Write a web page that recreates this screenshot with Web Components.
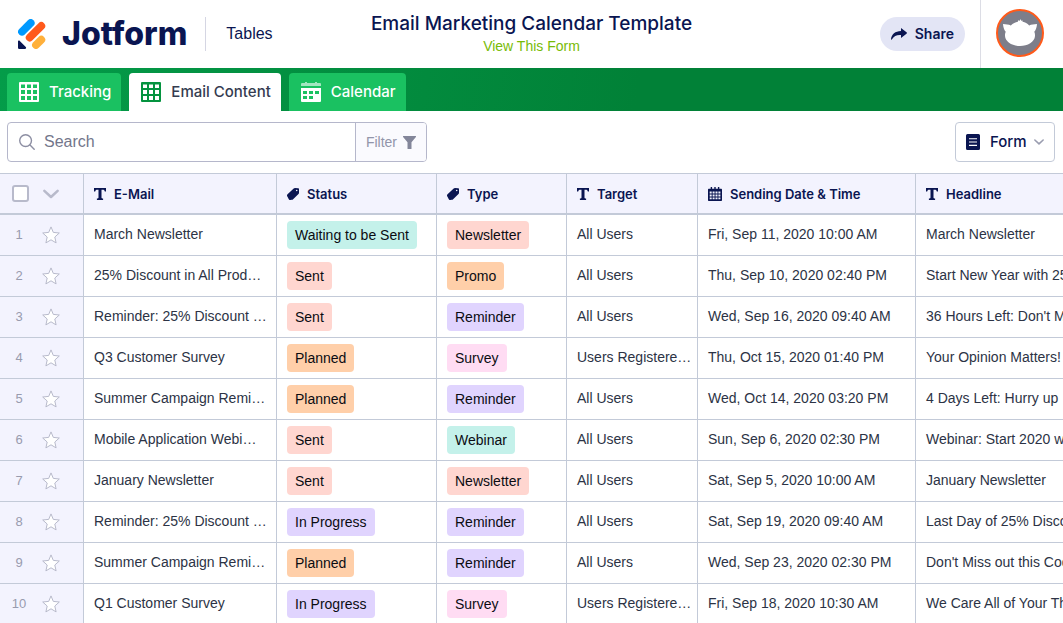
<!DOCTYPE html>
<html lang="en">
<head>
<meta charset="utf-8">
<title>Email Marketing Calendar Template</title>
<style>
  :root {
    --navy: #0a1551;
    --ink: #2c3345;
    --muted: #8d8fa3;
    --line: #c3cad8;
    --panel: #f3f3fe;
    --body: "Liberation Sans", Arial, sans-serif;
    --strong: Inter, "Liberation Sans", sans-serif;
  }
  body {
    margin: 0;
    font: 400 14px/20px var(--body);
    color: var(--ink);
    background: #fff;
  }
</style>
</head>
<body>
<tables-app></tables-app>

<script>
const ICONS = {
  logo: ['0 0 28 30', `
    <g stroke-width="7.800" stroke-linecap="round">
      <path d="M4 12.700 12.700 4" stroke="#0099ff"/>
      <path d="M11.700 18.600 23.300 7" stroke="#ff5a1c"/>
      <path d="M18 26 23.300 20.700" stroke="#ffb03b"/>
    </g>
    <path d="M0 22.600c0-1 1.100-1.400 1.800-.7l6 6.100c.7.700.200 1.900-.8 1.900H1.200A1.200 1.200 0 0 1 0 28.700z" fill="#0a1551"/>`],
  grid: ['0 0 20 20', `
    <path fill="currentColor" fill-rule="evenodd" d="M1 0h18a1 1 0 0 1 1 1v18a1 1 0 0 1-1 1H1a1 1 0 0 1-1-1V1a1 1 0 0 1 1-1z
      M2 2.500h4v3.500H2zM8 2.500h4v3.500H8zM14 2.500h4v3.500h-4z
      M2 8h4v4H2zM8 8h4v4H8zM14 8h4v4h-4z
      M2 14h4v4H2zM8 14h4v4H8zM14 14h4v4h-4z"/>`],
  calendar: ['0 0 20 20', `
    <path fill="currentColor" opacity=".6" d="M0 4V2a1 1 0 0 1 1-1h3V0h2v1h8V0h2v1h3a1 1 0 0 1 1 1v2z"/>
    <path fill="currentColor" fill-rule="evenodd" d="M0 6h20v13a1 1 0 0 1-1 1H1a1 1 0 0 1-1-1z
      M2 9v3h4V9zM8 9v3h4V9zM14 9v3h4V9zM2 14v3h4v-3zM8 14v3h4v-3z"/>`],
  share: ['0 0 16 12', `<path fill="currentColor" d="M10 0l5.500 4.300a.9.9 0 0 1 0 1.400L10 10V7C5.800 6.700 3 7.900.8 11.400c-.3.500-.8.300-.8-.2C.5 6.200 4.200 3 10 2.900z"/>`],
  search: ['0 0 16 16', `<g fill="none" stroke="#8d8fa3" stroke-width="1.400" stroke-linecap="round"><circle cx="6.600" cy="6.600" r="5.900"/><path d="M11 11l4.200 4.200"/></g>`],
  filter: ['0 0 13 13', `<path fill="#83869a" d="M.5 0h12c.5 0 .7.5.4.9L8.500 6.200v6.300a.5.5 0 0 1-.5.5H5a.5.5 0 0 1-.5-.5V6.200L.1.900C-.2.5 0 0 .5 0z"/>`],
  form: ['0 0 14 16', `<path fill="currentColor" fill-rule="evenodd" d="M1.500 0h11A1.500 1.500 0 0 1 14 1.500v13a1.500 1.500 0 0 1-1.500 1.500h-11A1.500 1.500 0 0 1 0 14.500v-13A1.500 1.500 0 0 1 1.500 0zM3 4.200v1.100h8V4.200zM3 7.400v1.200h8V7.400zM3 10.800v1.100h8v-1.100z"/>`],
  chevron: ['0 0 14 8', `<path d="M1.200 1.200 7 6.600l5.800-5.400" fill="none" stroke="currentColor" stroke-width="2.200" stroke-linecap="round" stroke-linejoin="round"/>`],
  text: ['0 0 12 12', `<path fill="currentColor" d="M0 0h12v3.600h-1.200c-.2-1.300-.8-1.900-2-1.900H7.500v7.900c0 .7.400.9 1.600 1V12H2.900v-1.400c1.200-.1 1.600-.3 1.600-1V1.700H3.200c-1.200 0-1.800.6-2 1.900H0z"/>`],
  tag: ['0 0 12 12', `<path fill="currentColor" fill-rule="evenodd" d="M11.300.2 8 0c-.5 0-1 .2-1.300.5L.5 6.300c-.6.6-.7 1.300-.3 2l1.600 3c.3.6.8.8 1.500.7l1.600-.2c.5-.1.9-.3 1.200-.6l5.400-5.300c.3-.3.5-.7.500-1.200V.9c0-.4-.3-.7-.7-.7zM9.700 1.700a.8.800 0 1 1 0 1.600.8.800 0 0 1 0-1.600z"/>`],
  date: ['0 0 14 14', `
    <path fill="currentColor" d="M0 2.800c0-.6.4-1 1-1h1.700V0h1.400v1.800h2.200V0h1.400v1.800h2.200V0h1.400v1.800H13c.6 0 1 .4 1 1V13c0 .6-.4 1-1 1H1c-.6 0-1-.4-1-1z"/>
    <path fill="#f3f3fe" d="M1.700 4.600h2v1.900h-2zM4.600 4.600h2v1.900h-2zM7.500 4.600h2v1.900h-2zM10.400 4.600h2v1.900h-2zM1.700 7.500h2v1.900h-2zM4.600 7.500h2v1.900h-2zM7.500 7.500h2v1.900h-2zM10.400 7.500h2v1.900h-2zM1.700 10.400h2v1.900h-2zM4.600 10.400h2v1.900h-2zM7.500 10.400h2v1.900h-2zM10.400 10.400h2v1.900h-2z"/>`],
  star: ['0 0 18 18', `<path d="M9 .9l2.300 5.500 6 .6-4.500 4 1.300 5.900L9 13.800l-5.100 3.100L5.200 11 .7 7l6-.6z" fill="#fff" stroke="#b8bacb" stroke-width="1"/>`],
  avatar: ['0 0 48 48', `
    <circle cx="24" cy="24" r="23" fill="#7d7e8a" stroke="#ff5a1a" stroke-width="2"/>
    <path fill="#fff" d="M7 15c3 .2 5.600.5 7.800 1.400 2.200-2 4.700-3.200 7-3.700.2-.8.600-1.400 1.100-1.700l.5 1.200c.2-1 .8-1.600 1.500-2 0 .8.200 1.300.5 1.700.3-.3.600-.5 1-.6-.1.600 0 1.100.3 1.500 2.400.6 4.600 1.800 6.500 3.600C35.400 15.500 38 15.200 41 15c-.2 3-1 5.800-2.700 7.800.6 1.400.8 2.800.7 4.200C38.600 33 31.700 37 24 37S9.400 33 9 27c-.1-1.400.1-2.800.7-4.200C8 20.800 7.200 18 7 15z"/>`]
};

const define = (name, html) => customElements.define(name, class extends HTMLElement {
  constructor() {
    super();
    const template = document.createElement('template');
    template.innerHTML = html;
    this.attachShadow({ mode: 'open' }).append(template.content.cloneNode(true));
  }
});

/* <ui-icon name="…"> draws one icon, sized by the --w and --h properties */
customElements.define('ui-icon', class extends HTMLElement {
  connectedCallback() {
    if (this.shadowRoot) return;
    const [box, art] = ICONS[this.getAttribute('name')];
    const [, , w, h] = box.split(' ');
    this.attachShadow({ mode: 'open' }).innerHTML = `
      <style>
        :host { display: inline-block; flex: none; width: var(--w, ${w}px); height: var(--h, ${h}px); }
        svg { display: block; width: 100%; height: 100%; }
      </style>
      <svg viewBox="${box}" fill="none" aria-hidden="true">${art}</svg>`;
  }
});

define('brand-logo', `
  <style>
    :host { display: flex; align-items: center; }
    .home { display: flex; align-items: center; gap: 16px; color: var(--navy); text-decoration: none; }
    .word { font: 800 32px/34px var(--strong); }
    .product { margin-left: 18px; padding-left: 20px; border-left: 1px solid #d5d6e3; font-size: 16px; line-height: 34px; color: var(--navy); }
  </style>
  <a class="home" href="#"><ui-icon name="logo"></ui-icon><span class="word">Jotform</span></a>
  <span class="product">Tables</span>
`);

define('share-button', `
  <style>
    button { display: flex; align-items: center; gap: 8px; height: 34px; padding: 0 11px; border: 0; border-radius: 17px;
      background: #e3e5f5; color: var(--navy); font: 600 14px/20px var(--strong); cursor: pointer; }
  </style>
  <button type="button"><ui-icon name="share"></ui-icon><slot></slot></button>
`);

define('app-header', `
  <style>
    :host { display: grid; grid-template-columns: 1fr auto 1fr; height: 68px; flex: none; }
    brand-logo { padding-left: 18px; }
    .middle { display: flex; flex-direction: column; align-items: center; padding-top: 10px; }
    h1 { margin: 0; font: 500 19px/28px var(--strong); color: var(--navy); }
    a { line-height: 16px; color: #78bb07; text-decoration: none; }
    .right { display: flex; justify-content: flex-end; align-items: center; }
    .account { display: flex; align-items: center; height: 68px; margin-left: 15px; padding: 0 19px 2px 15px; border-left: 1px solid #dcdde5; box-sizing: border-box; }
    .account button { display: flex; padding: 0; border: 0; background: none; }
  </style>
  <brand-logo></brand-logo>
  <div class="middle"><h1>Email Marketing Calendar Template</h1><a href="#">View This Form</a></div>
  <div class="right">
    <share-button>Share</share-button>
    <div class="account"><button type="button" aria-label="Account"><ui-icon name="avatar"></ui-icon></button></div>
  </div>
`);

define('sheet-tab', `
  <style>
    :host { display: block; --bg: #1ac161; --fg: #fff; --mark: #fff; }
    :host([active]) { --bg: #fff; --fg: #343c50; --mark: #04933f; }
    a { display: flex; align-items: center; gap: 10px; height: 38px; padding: 0 10px 0 12px; border-radius: 4px 4px 0 0;
      background: var(--bg); color: var(--fg); font: 500 15px/20px var(--strong); text-decoration: none; }
    ::slotted(ui-icon) { color: var(--mark); }
  </style>
  <a href="#"><slot name="icon"></slot><slot></slot></a>
`);

define('tab-bar', `
  <style>
    :host { display: block; flex: none; background: linear-gradient(100deg, #049c49, #018137 60%); }
    nav { display: flex; gap: 8px; padding: 5px 7px 0; }
  </style>
  <nav aria-label="Tabs"><slot></slot></nav>
`);

define('search-box', `
  <style>
    :host { display: flex; flex: 0 1 420px; min-width: 0; height: 40px; box-sizing: border-box; border: 1px solid #b5b7cb; border-radius: 4px; overflow: hidden; }
    label { display: flex; flex: 1; align-items: center; gap: 9px; min-width: 0; padding-left: 11px; }
    input { flex: 1; min-width: 0; padding: 0; border: 0; outline: 0; background: none; font: 400 16px/24px var(--body); color: var(--ink); }
    input::placeholder { color: #73768b; opacity: 1; }
    button { display: flex; align-items: center; gap: 6px; padding: 0 10px; border: 0; border-left: 1px solid #b5b7cb;
      background: #fafafe; color: #9295aa; font: 400 14px/20px var(--body); }
  </style>
  <label><ui-icon name="search"></ui-icon><input type="search" placeholder="Search" aria-label="Search"></label>
  <button type="button">Filter<ui-icon name="filter"></ui-icon></button>
`);

define('view-select', `
  <style>
    label { display: flex; align-items: center; height: 40px; padding: 0 10px; box-sizing: border-box; border: 1px solid var(--line); border-radius: 4px; color: var(--navy); }
    select { appearance: none; margin: 0 7px 0 10px; padding: 0; border: 0; outline: 0; background: none; color: inherit; font: 500 15px/20px var(--strong); }
    .arrow { --w: 10px; --h: 6px; color: #9a9db0; }
  </style>
  <label><ui-icon name="form"></ui-icon><select aria-label="View"><option>Form</option></select><ui-icon class="arrow" name="chevron"></ui-icon></label>
`);

define('tool-bar', `
  <style>:host { display: flex; justify-content: space-between; gap: 16px; flex: none; padding: 11px 8px 11px 7px; }</style>
  <search-box></search-box><view-select></view-select>
`);

define('tag-pill', `
  <style>
    :host { display: inline-block; padding: 4px 8px; border-radius: 4px; color: #0b0c12; vertical-align: middle; background: #ffd6d0; }
    :host([tone=mint]) { background: #c4f1ea; }
    :host([tone=orange]) { background: #ffcfa9; }
    :host([tone=violet]) { background: #e0d4fe; }
    :host([tone=pink]) { background: #ffdcf3; }
  </style>
  <slot></slot>
`);

const TONES = { 'Waiting to be Sent': 'mint', Webinar: 'mint', Sent: 'rose', Newsletter: 'rose', Promo: 'orange', Planned: 'orange',
  Reminder: 'violet', 'In Progress': 'violet', Survey: 'pink' };
const COLUMNS = [['text', 'E-Mail'], ['tag', 'Status'], ['tag', 'Type'], ['text', 'Target'], ['date', 'Sending Date &amp; Time'], ['text', 'Headline']];
const ROWS = [
  ['March Newsletter', 'Waiting to be Sent', 'Newsletter', 'All Users', 'Fri, Sep 11, 2020 10:00 AM', 'March Newsletter'],
  ['25% Discount in All Prod…', 'Sent', 'Promo', 'All Users', 'Thu, Sep 10, 2020 02:40 PM', 'Start New Year with 25%'],
  ['Reminder: 25% Discount …', 'Sent', 'Reminder', 'All Users', 'Wed, Sep 16, 2020 09:40 AM', "36 Hours Left: Don't Miss"],
  ['Q3 Customer Survey', 'Planned', 'Survey', 'Users Registere…', 'Thu, Oct 15, 2020 01:40 PM', 'Your Opinion Matters!'],
  ['Summer Campaign Remi…', 'Planned', 'Reminder', 'All Users', 'Wed, Oct 14, 2020 03:20 PM', '4 Days Left: Hurry up'],
  ['Mobile Application Webi…', 'Sent', 'Webinar', 'All Users', 'Sun, Sep 6, 2020 02:30 PM', 'Webinar: Start 2020 with'],
  ['January Newsletter', 'Sent', 'Newsletter', 'All Users', 'Sat, Sep 5, 2020 10:00 AM', 'January Newsletter'],
  ['Reminder: 25% Discount …', 'In Progress', 'Reminder', 'All Users', 'Sat, Sep 19, 2020 09:40 AM', 'Last Day of 25% Discount'],
  ['Summer Campaign Remi…', 'Planned', 'Reminder', 'All Users', 'Wed, Sep 23, 2020 02:30 PM', "Don't Miss out this Code"],
  ['Q1 Customer Survey', 'In Progress', 'Survey', 'Users Registere…', 'Fri, Sep 18, 2020 10:30 AM', 'We Care All of Your Thoughts']
];
const cell = (value, i) => i === 1 || i === 2
  ? `<td><tag-pill tone="${TONES[value]}">${value}</tag-pill></td>`
  : `<td class="plain">${value}</td>`;

define('data-grid', `
  <style>
    :host { display: block; flex: 1; min-height: 0; overflow: auto; scrollbar-width: none; }
    table { width: 100%; table-layout: fixed; border-collapse: separate; border-spacing: 0; }
    th, td { box-sizing: border-box; height: 41px; padding: 0 10px; border: solid var(--line); border-width: 0 1px 1px 0; text-align: left; white-space: nowrap; overflow: hidden; }
    td.plain { padding-bottom: 2px; }
    thead th { height: 42px; border-width: 1px 1px 2px 0; background: var(--panel); color: var(--navy); font: 600 13px/20px var(--strong); }
    th:last-child, td:last-child { padding-right: 0; border-right-width: 0; }
    tbody th { background: var(--panel); color: #989bae; font-size: 13px; font-weight: 400; }
    th.lead { padding: 0; }
    .pick, .name { display: flex; align-items: center; }
    .pick { --w: 16px; --h: 10px; gap: 14px; padding-left: 12px; color: #b8bacb; }
    .name { gap: 8px; }
    input { appearance: none; width: 17px; height: 17px; margin: 0; box-sizing: border-box; border: 2px solid #b8bacb; border-radius: 3px; background: #fff; }
    .row { display: grid; grid-template-columns: 38px auto; align-items: center; justify-content: start; }
    .row span { text-align: center; }
    button { display: flex; margin-left: 4px; padding: 0; border: 0; background: none; }
    .pick button { margin: 0; color: inherit; }
  </style>
  <table>
    <colgroup><col style="width:84px"><col style="width:193px"><col style="width:160px"><col style="width:130px"><col style="width:131px"><col style="width:218px"><col></colgroup>
    <thead><tr>
      <th class="lead"><div class="pick"><input type="checkbox" aria-label="Select all rows"><button type="button" aria-label="Selection options"><ui-icon name="chevron"></ui-icon></button></div></th>
      ${COLUMNS.map(([icon, label]) => `<th scope="col"><div class="name"><ui-icon name="${icon}"></ui-icon>${label}</div></th>`).join('')}
    </tr></thead>
    <tbody>${ROWS.map((row, n) => `<tr><th class="lead" scope="row"><div class="row"><span>${n + 1}</span><button type="button" aria-label="Star row"><ui-icon name="star"></ui-icon></button></div></th>${row.map(cell).join('')}</tr>`).join('')}</tbody>
  </table>
`);

define('tables-app', `
  <style>:host { display: flex; flex-direction: column; height: 100vh; overflow: hidden; }</style>
  <app-header></app-header>
  <tab-bar>
    <sheet-tab><ui-icon slot="icon" name="grid"></ui-icon>Tracking</sheet-tab>
    <sheet-tab active><ui-icon slot="icon" name="grid"></ui-icon>Email Content</sheet-tab>
    <sheet-tab><ui-icon slot="icon" name="calendar"></ui-icon>Calendar</sheet-tab>
  </tab-bar>
  <tool-bar></tool-bar>
  <data-grid></data-grid>
`);
</script>
</body>
</html>
